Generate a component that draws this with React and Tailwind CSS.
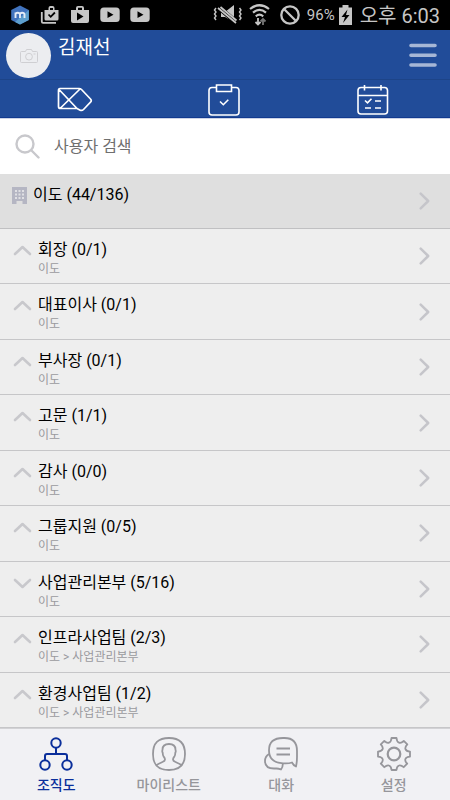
import React from 'react';

const root = { name: '이도 (44/136)' };

const groups = [
  { name: '회장 (0/1)', path: '이도' },
  { name: '대표이사 (0/1)', path: '이도' },
  { name: '부사장 (0/1)', path: '이도' },
  { name: '고문 (1/1)', path: '이도' },
  { name: '감사 (0/0)', path: '이도' },
  { name: '그룹지원 (0/5)', path: '이도' },
  { name: '사업관리본부 (5/16)', path: '이도', open: true },
  { name: '인프라사업팀 (2/3)', path: '이도 > 사업관리본부' },
  { name: '환경사업팀 (1/2)', path: '이도 > 사업관리본부' },
];

const tabs = [
  { label: '조직도', Icon: OrgIcon, active: true },
  { label: '마이리스트', Icon: PersonIcon },
  { label: '대화', Icon: ChatIcon },
  { label: '설정', Icon: GearIcon },
];

function StatusBar() {
  return (
    <div className="flex h-[30px] items-center justify-between bg-black px-[10px] text-[#c6c6c6]">
      <div className="flex items-center gap-[10px]">
        <svg className="size-5" viewBox="0 0 20 20">
          <path d="M10 .5 18.8 5v10L10 19.5 1.2 15V5z" fill="#4173bd" />
          <path d="M18.8 5v10L10 19.5 5 17z" fill="#5d9fcd" />
          <path d="M5.500 13V7.500M5.500 9.500q0-1.700 2.200-1.700t2.300 1.700V13M10 9.500q0-1.700 2.200-1.700t2.300 1.700V13" fill="none" stroke="#e4ecf7" strokeWidth="1.900" />
        </svg>
        <svg className="size-5" viewBox="0 0 20 20">
          <path d="M4.500 5h4V3q0-2 2-2h2q2 0 2 2v2h4v9q0 1.500-1.500 1.500H6Q4.500 15.500 4.500 14zM10 5h3V3h-3z" fill="currentColor" fillRule="evenodd" />
          <path d="M1.800 7v9.500q0 1.300 1.200 1.300h13" fill="none" stroke="currentColor" strokeWidth="1.800" />
          <path d="m8.500 9.500 2.200 2.300 4.200-4.300" fill="none" stroke="#000" strokeWidth="1.800" />
        </svg>
        <svg className="size-5" viewBox="0 0 20 20">
          <path d="M1 5h5V3q0-2 2-2h4q2 0 2 2v2h5v11q0 2-2 2H3q-2 0-2-2zM8 5h4V2.800H8z" fill="currentColor" fillRule="evenodd" />
          <path d="m7 7.500 6.500 4L7 15.500z" fill="#000" />
        </svg>
        <YoutubeIcon />
        <YoutubeIcon />
      </div>
      <div className="flex items-center">
        <svg className="h-[22px] w-[30px]" viewBox="0 0 30 22" fill="none" stroke="currentColor">
          <path d="m3 4-1.500 2L3 8l-1.500 2L3 12l-1.500 2L3 16M26.500 4 28 6l-1.500 2 1.500 2-1.500 2 1.500 2-1.500 2" strokeWidth="1.400" />
          <path d="M8 8h4l9-7v17l-9-5H8z" fill="currentColor" stroke="none" />
          <path d="m6.500 4 17 14.500" stroke="#000" strokeWidth="5" />
          <path d="m5 4 18 15M7.500 3l16 13.500" strokeWidth="1.700" />
        </svg>
        <svg className="ml-[6px] h-[22px] w-[21px]" viewBox="0 0 21 22" fill="none" stroke="currentColor" strokeWidth="2.200">
          <path d="M1 5q9.500-7.500 19 0M4 8.700q6.500-5.500 13 0M6.800 12.300q3.700-3.200 7.400 0" />
          <path d="M9 14v6M6.500 18 9 20.500l2.500-2.500" strokeWidth="1.800" />
          <path d="M14 21v-6M11.500 17.500l2.500-2.500 2.500 2.500" stroke="#777" strokeWidth="1.800" />
        </svg>
        <svg className="ml-[10px] size-5" viewBox="0 0 20 20" fill="none" stroke="currentColor" strokeWidth="2.300">
          <circle cx="10" cy="10" r="8.700" />
          <path d="m4 4 12 12" />
        </svg>
        <span className="ml-[7px] text-[15px] leading-5">96%</span>
        <svg className="ml-[4px] h-5 w-[13px]" viewBox="0 0 13 20">
          <path d="M0 2.500h3.500V0h6v2.500H13V20H0z" fill="currentColor" />
          <path d="M8.500 4.500 2.500 12H6l-2 6 6.500-8H7z" fill="#000" />
        </svg>
        <span className="ml-[8px] pt-px text-[20px] leading-6">오후 6:03</span>
      </div>
    </div>
  );
}

function YoutubeIcon() {
  return (
    <svg className="size-5" viewBox="0 0 20 20">
      <rect x="0.300" y="2.500" width="19.400" height="14.500" rx="3.500" fill="currentColor" />
      <path d="m7.500 6.300 6 3.400-6 3.400z" fill="#000" />
    </svg>
  );
}

function Header() {
  return (
    <header className="flex h-[50px] justify-between border-b border-[#1d4488] bg-[#214c99] pl-[6px] pr-[13px]">
      <div className="flex gap-[7px]">
        <div className="mt-[3px] flex size-[45px] items-center justify-center rounded-full bg-[#ecedf0]">
          <svg className="h-[14px] w-[18px]" viewBox="0 0 18 14" fill="none" stroke="#cfcfd2">
            <path d="M1.500 2.500h4l1-2h5l1 2h4q1 0 1 1v9q0 1-1 1h-15q-1 0-1-1v-9q0-1 1-1z" />
            <circle cx="9" cy="7.700" r="3.400" />
            <path d="M13.500 5h2" />
          </svg>
        </div>
        <h1 className="mt-[6px] text-[19px] leading-6 text-white">김재선</h1>
      </div>
      <button type="button" aria-label="메뉴" className="flex items-center pt-px">
        <svg className="h-6 w-7" viewBox="0 0 28 24" stroke="#a6b7d6" strokeWidth="3.600" strokeLinecap="round">
          <path d="M2 2.500h24M2 12.200h24M2 22h24" />
        </svg>
      </button>
    </header>
  );
}

function Toolbar() {
  return (
    <nav className="grid h-[38px] grid-cols-3 border-b border-[#123a8f] bg-[#214c99] pt-[2px] pr-[2px] text-white">
      <button type="button" aria-label="쪽지" className="flex items-center justify-center">
        <svg className="h-[25px] w-[36px]" viewBox="0 0 36 25" fill="none" stroke="currentColor" strokeWidth="1.700" strokeLinejoin="round">
          <path d="M3 1.500h19q1.500 0 2.500 1l9 9.500q1.500 1.700 0 3.200l-7 7.300q-1.500 1.500-3.300.7L20 21.500H3.500q-2 0-2-2V3.500q0-2 1.500-2zM2 2.500l18 19M23 2 3 21.500" />
        </svg>
      </button>
      <button type="button" aria-label="결재" className="flex items-center justify-center">
        <svg className="h-8 w-8" viewBox="0 0 32 32" fill="none" stroke="currentColor" strokeWidth="1.600">
          <path d="M8.500 3.500H4q-3 0-3 3V28q0 3 3 3h24q3 0 3-3V6.500q0-3-3-3h-4.500" />
          <path d="M8.500 1h15v6.500h-15zM12 17.500l3.300 3.200 5-5" />
        </svg>
      </button>
      <button type="button" aria-label="일정" className="flex items-center justify-center">
        <svg className="h-8 w-8" viewBox="0 0 32 32" fill="none" stroke="currentColor" strokeWidth="1.600">
          <rect x="1" y="3.500" width="29.500" height="26.500" rx="3" />
          <path d="M1 11.500h29.500M7.500 1v5.500M24 1v5.500M8 16.500l2.500 2.300 4-4M18 17h6M8 24h6M18 24h6" />
        </svg>
      </button>
    </nav>
  );
}

function ChevronRight() {
  return (
    <svg className="h-[18px] w-[11px] shrink-0 self-center" viewBox="0 0 11 18" fill="none" stroke="#c5c5ca" strokeWidth="2.500" strokeLinecap="round" strokeLinejoin="round">
      <path d="m1.700 1.700 7.500 7.300-7.500 7.300" />
    </svg>
  );
}

function GroupRow({ group }) {
  return (
    <li className="flex min-h-[55px] flex-1 border-b border-[#c6c6c8]">
      <button type="button" aria-expanded={!!group.open} className="flex flex-1 items-start pl-[13px] pr-[20px] text-left">
        <svg className="mt-[16px] h-[11px] w-[19px] shrink-0" viewBox="0 0 19 11" fill="none" stroke="#c8c8cc" strokeWidth="2.600" strokeLinecap="round" strokeLinejoin="round">
          <path d={group.open ? 'm2 2 7.500 7L17 2' : 'm2 9 7.500-7L17 9'} />
        </svg>
        <span className="ml-[6px] mt-[9px] flex flex-1 flex-col">
          <span className="text-base leading-[23px] text-black">{group.name}</span>
          <span className="text-xs leading-4 text-[#9a9a9e]">{group.path}</span>
        </span>
        <ChevronRight />
      </button>
    </li>
  );
}

function OrgIcon() {
  return (
    <svg className="size-[34px]" viewBox="0 0 34 34" fill="none" stroke="currentColor" strokeWidth="2">
      <circle cx="17" cy="6" r="4.700" />
      <circle cx="6" cy="28" r="4.700" />
      <circle cx="28" cy="28" r="4.700" />
      <path d="M17 10.700V17M6 23.300V19q0-2 2-2h18q2 0 2 2v4.300" />
    </svg>
  );
}

function PersonIcon() {
  return (
    <svg className="size-[34px]" viewBox="0 0 34 34" fill="none" stroke="currentColor" strokeWidth="1.800">
      <path d="M17 1C28 1 33 6 33 17S28 33 17 33 1 28 1 17 6 1 17 1z" />
      <path d="M4 28.500q2-1.500 6.500-3.500 2.500-1 2.500-2.500 0-1.300-1.300-2.800-1-1.300-1-4-.8-1.200-.2-3Q10.500 7 17 7t6.500 5.700q.6 1.800-.2 3 0 2.700-1 4Q21 21.200 21 22.500q0 1.500 2.500 2.500 4.500 2 6.500 3.500" />
    </svg>
  );
}

function ChatIcon() {
  return (
    <svg className="size-[34px]" viewBox="0 0 34 34" fill="none" stroke="currentColor" strokeWidth="1.800" strokeLinejoin="round">
      <path d="M19 1h1.500Q33 1 33 14v6q0 5-1 9.500-2.500-1-4-4-3.500 1.200-9 .8Q5 25.500 5 13.500 5 1 19 1z" />
      <path d="M5 17q-4 2.500-4 7 0 7.500 9 7.500h2.500q2 0 4.500 1 2-2.500 1.800-6.200M12.500 11.500h13.500M12.500 17.500h13.500" />
    </svg>
  );
}

function GearIcon() {
  return (
    <svg className="size-[34px]" viewBox="0 0 34 34" fill="none" stroke="currentColor" strokeWidth="1.800" strokeLinejoin="round">
      <path d="M14.500 1h5q.3 3.800 2.500 4.600 2 .9 4.800-1.700l3.500 3.500q-2.600 2.800-1.800 4.700.8 2.200 4.500 2.500v5q-3.800.3-4.600 2.400-.8 2 1.800 4.700l-3.500 3.500q-2.800-2.500-4.700-1.700-2.200.8-2.500 4.500h-5q-.3-3.700-2.500-4.500-1.900-.8-4.700 1.700l-3.500-3.500q2.600-2.700 1.800-4.700-.8-2.100-4.600-2.400v-5q3.700-.3 4.600-2.500.8-1.900-1.800-4.700l3.500-3.500q2.800 2.600 4.700 1.700Q14.200 4.800 14.500 1z" />
      <circle cx="17" cy="17" r="6.300" strokeWidth="2.200" />
    </svg>
  );
}

export default function App() {
  return (
    <div className="flex min-h-screen flex-col bg-[#eee] font-[Roboto,'Noto_Sans_CJK_KR',sans-serif]">
      <StatusBar />
      <Header />
      <Toolbar />

      <label className="flex h-14 items-center border-t border-[#ccd4e6] bg-white pl-[15px]">
        <svg className="size-[25px]" viewBox="0 0 25 25" fill="none" stroke="#c8c8cc" strokeWidth="2.400" strokeLinecap="round">
          <circle cx="10" cy="10" r="8.500" />
          <path d="m16.500 16.500 7 7" />
        </svg>
        <input type="search" aria-label="사용자 검색" placeholder="사용자 검색" className="ml-[14px] flex-1 text-base leading-6 outline-none placeholder:text-[#6f6f6f]" />
      </label>

      <ul className="flex flex-1 flex-col">
        <li className="flex min-h-[55px] flex-1 border-b border-[#c0c0c2] bg-[#dfdfdf]">
          <button type="button" className="flex flex-1 items-start pl-[12px] pr-[20px] text-left">
            <svg className="mt-[13px] h-[17px] w-[15px] shrink-0" viewBox="0 0 15 17">
              <path d="M0 0h15v17h-4.500v-3h-6v3H0z" fill="#b5b6c3" />
              <path d="M3 3h2v2H3zm3.500 0h2v2h-2zM10 3h2v2h-2zM3 6.500h2v2H3zm3.500 0h2v2h-2zm3.500 0h2v2h-2zM3 10h2v2H3zm3.500 0h2v2h-2zm3.500 0h2v2h-2z" fill="#e0e0e4" />
            </svg>
            <span className="ml-[6px] mt-[9px] flex-1 text-base leading-[23px] text-black">{root.name}</span>
            <ChevronRight />
          </button>
        </li>
        {groups.map((group) => (
          <GroupRow key={group.name} group={group} />
        ))}
      </ul>

      <nav className="grid h-[72px] grid-cols-4 border-t border-[#d2d2d5] bg-[#f1f1f4]">
        {tabs.map(({ label, Icon, active }) => (
          <a
            key={label}
            href="#"
            aria-current={active ? 'page' : undefined}
            className={`flex flex-col items-center pt-[8px] text-sm leading-5 font-medium ${active ? 'text-[#0b2f9b]' : 'text-[#96969b]'}`}
          >
            <Icon />
            <span className="mt-[4px]">{label}</span>
          </a>
        ))}
      </nav>
    </div>
  );
}
